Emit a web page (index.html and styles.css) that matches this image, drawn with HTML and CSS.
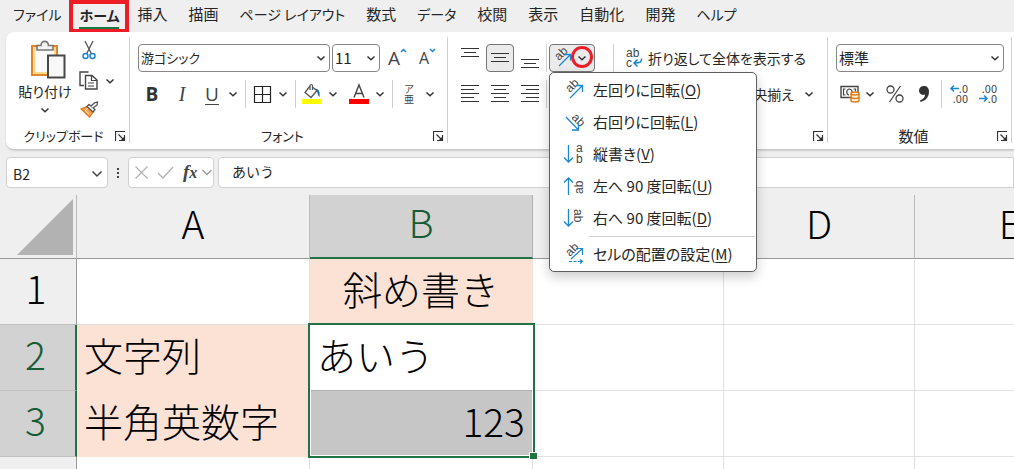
FILE: index.html
```html
<!DOCTYPE html>
<html lang="ja">
<head>
<meta charset="utf-8">
<title>斜め書き</title>
<link rel="stylesheet" href="styles.css">
</head>
<body>
<svg class="defs" aria-hidden="true">
  <symbol id="chev" viewBox="0 0 10 8"><path d="M1.500 2.500 5 5.800 8.500 2.500" fill="none" stroke="currentColor" stroke-width="1.500"/></symbol>
  <symbol id="launch" viewBox="0 0 11 11"><path d="M.5 10V.5H10M3.500 3.500 8 8M9.500 4V9.500H4" fill="none" stroke="#333" stroke-width="1.200"/><path d="M9.500 5.500V9.500H5.500Z" fill="#333"/></symbol>
</svg>

<nav class="tabs">
  <button class="tab kana file">ファイル</button>
  <button class="tab kana active"><span>ホーム</span></button>
  <button class="tab">挿入</button>
  <button class="tab">描画</button>
  <button class="tab kana">ページ レイアウト</button>
  <button class="tab">数式</button>
  <button class="tab kana">データ</button>
  <button class="tab">校閲</button>
  <button class="tab">表示</button>
  <button class="tab">自動化</button>
  <button class="tab">開発</button>
  <button class="tab kana">ヘルプ</button>
</nav>

<div class="ribbon">
  <section class="group clipboard">
    <div class="clip-body">
      <button class="paste">
        <svg width="36" height="40" viewBox="0 0 36 40"><path d="M2 6H27V35H2Z" fill="#fbd98a" stroke="#e0862a" stroke-width="2"/><path d="M5.500 9H24V32H5.500Z" fill="#fafafa"/><path d="M7 10V5.500H11C11 0 18 0 18.500 5.500H23V10Z" fill="#f3f3f3" stroke="#777" stroke-width="1.600"/><path d="M18 15.500H34.500V37.500H18Z" fill="#f8f8f8" stroke="#484848" stroke-width="2"/></svg>
        <span>貼り付け</span>
        <svg class="chev"><use href="#chev"/></svg>
      </button>
      <div class="clip-side">
        <button class="icon" aria-label="cut"><svg width="14" height="20" viewBox="0 0 14 20"><path d="M3 1 9.500 14M11 1 4.500 14" fill="none" stroke="#555" stroke-width="1.300"/><circle cx="3.500" cy="16" r="2.500" fill="none" stroke="#1b87d0" stroke-width="1.500"/><circle cx="10.500" cy="16" r="2.500" fill="none" stroke="#1b87d0" stroke-width="1.500"/></svg></button>
        <div class="copy"><button class="icon" aria-label="copy"><svg width="19" height="19" viewBox="0 0 19 19"><path d="M5 14.500H1V1H9.500" fill="none" stroke="#444" stroke-width="1.400"/><path d="M6.500 4.500H13L18 9V18H6.500Z" fill="#fff" stroke="#444" stroke-width="1.400"/><path d="M12.500 4.500V9.500H18M9 12H15M9 15H15" fill="none" stroke="#444" stroke-width="1.200"/></svg></button><button class="drop" aria-label="copy options"><svg class="chev"><use href="#chev"/></svg></button></div>
        <button class="icon" aria-label="format painter"><svg width="19" height="17" viewBox="0 0 19 17"><path d="M1 8 7 5.500 13 11 9.500 16 Z" fill="#f7a048" stroke="#e07818" stroke-width="1.200"/><path d="M5 9.500 9 13M8 7.500 5.500 9" stroke="#fff3d8" stroke-width="1"/><path d="M7 5.500 9 3.500 15 8.500 13 11Z" fill="#fff" stroke="#555" stroke-width="1.300"/><path d="M11 5 15 1.500 17.500 1 17 4 13 7" fill="#fff" stroke="#555" stroke-width="1.300"/></svg></button>
      </div>
    </div>
    <footer><span>クリップボード</span><button class="launch" aria-label="clipboard settings"><svg width="11" height="11"><use href="#launch"/></svg></button></footer>
  </section>

  <section class="group font">
    <div class="row first">
      <div class="combo name"><select aria-label="フォント"><option>游ゴシック</option></select><svg class="chev"><use href="#chev"/></svg></div>
      <div class="combo size"><select aria-label="size"><option>11</option></select><svg class="chev"><use href="#chev"/></svg></div>
      <button class="grow big">A<svg width="7" height="5" viewBox="0 0 7 5"><path d="M1 4 3.500 1.500 6 4" fill="none" stroke="#1b87d0" stroke-width="1.500"/></svg></button>
      <button class="grow">A<svg width="7" height="5" viewBox="0 0 7 5"><path d="M1 1 3.500 3.500 6 1" fill="none" stroke="#1b87d0" stroke-width="1.500"/></svg></button>
    </div>
    <div class="row second">
      <button class="tool bold">B</button>
      <button class="tool italic">I</button>
      <button class="tool under">U</button>
      <button class="drop tight" aria-label="underline options"><svg class="chev"><use href="#chev"/></svg></button>
      <i class="rule"></i>
      <button class="tool" aria-label="borders"><svg width="17" height="17" viewBox="0 0 17 17"><path d="M.5.500H16.500V16.500H.5ZM8.500.500V16.500M.5 8.500H16.500" fill="none" stroke="#222" stroke-width="1.200"/></svg></button>
      <button class="drop" aria-label="border options"><svg class="chev"><use href="#chev"/></svg></button>
      <i class="rule"></i>
      <button class="tool" aria-label="fill"><svg width="20" height="20" viewBox="0 0 20 20"><path d="M8 2 3 8.500 9 13.500 15 6.500 11 3.500" fill="#fff" stroke="#555" stroke-width="1.300"/><path d="M8 6V2C8 0 10.500 0 10.500 2V6" fill="none" stroke="#555" stroke-width="1.200"/><path d="M12 5C16 4 18.500 7 17.500 13 16 12 15.500 9 15 7Z" fill="#1769aa"/><path d="M0 15H20V20H0Z" fill="#ff0"/></svg></button>
      <button class="drop wide" aria-label="fill options"><svg class="chev"><use href="#chev"/></svg></button>
      <button class="tool" aria-label="font color"><svg width="20" height="20" viewBox="0 0 20 20"><path d="M5 13.500 10 1 15 13.500M6.500 9.500H13.500" fill="none" stroke="#444" stroke-width="1.400"/><path d="M0 15H20V20H0Z" fill="red"/></svg></button>
      <button class="drop" aria-label="color options"><svg class="chev"><use href="#chev"/></svg></button>
      <i class="rule"></i>
      <button class="tool ruby"><span>ア</span><span>亜</span></button>
      <button class="drop" aria-label="ruby options"><svg class="chev"><use href="#chev"/></svg></button>
    </div>
    <footer><span>フォント</span><button class="launch" aria-label="font settings"><svg width="11" height="11"><use href="#launch"/></svg></button></footer>
  </section>

  <section class="group align">
    <div class="row first">
      <button class="tool" aria-label="top"><svg width="18" height="28" viewBox="0 0 18 28"><path d="M0 4.500H18M3 8.500H15M0 12.500H18" stroke="#333" stroke-width="1.100"/></svg></button>
      <button class="tool on" aria-label="middle"><svg width="18" height="28" viewBox="0 0 18 28"><path d="M0 9.500H18M3 13.500H15M0 17.500H18" stroke="#333" stroke-width="1.100"/></svg></button>
      <button class="tool" aria-label="bottom"><svg width="18" height="28" viewBox="0 0 18 28"><path d="M0 15.500H18M3 19.500H15M0 23.500H18" stroke="#333" stroke-width="1.100"/></svg></button>
      <i class="rule near"></i>
      <div class="orient">
        <button class="orient-btn" aria-haspopup="menu" aria-expanded="true" aria-label="orientation">
          <svg width="20" height="20" viewBox="0 0 20 20"><text class="ab" transform="translate(6 13) rotate(-45)">ab</text><path d="M6 18 17 7M11.500 6.500H17.500V12.500" fill="none" stroke="#1b87d0" stroke-width="1.300"/></svg>
          <svg class="chev"><use href="#chev"/></svg>
          <span class="ring"></span>
        </button>
        <div class="menu" role="menu">
          <button role="menuitem"><svg width="20" height="20" viewBox="0 0 20 20"><text class="ab" transform="translate(6 13) rotate(-45)">ab</text><path d="M6 18 18 6M12 5.500H18.500V12" fill="none" stroke="#1b87d0" stroke-width="1.300"/></svg><span>左回りに回転(<u>O</u>)</span></button>
          <button role="menuitem"><svg width="20" height="20" viewBox="0 0 20 20"><text class="ab" transform="translate(7 6) rotate(45)">ab</text><path d="M2 5 14 17.500M14.500 11.500V18H8" fill="none" stroke="#1b87d0" stroke-width="1.300"/></svg><span>右回りに回転(<u>L</u>)</span></button>
          <button role="menuitem"><svg width="20" height="20" viewBox="0 0 20 20"><text class="ab" x="12" y="8">a</text><text class="ab" x="12" y="19">b</text><path d="M4.500 1V18M0 13.500 4.500 18 9 13.500" fill="none" stroke="#1b87d0" stroke-width="1.300"/></svg><span>縦書き(<u>V</u>)</span></button>
          <button role="menuitem"><svg width="20" height="20" viewBox="0 0 20 20"><text class="ab" transform="translate(19 18) rotate(-90)">ab</text><path d="M4.500 19V2M0 6.500 4.500 2 9 6.500" fill="none" stroke="#1b87d0" stroke-width="1.300"/></svg><span>左へ 90 度回転(<u>U</u>)</span></button>
          <button role="menuitem"><svg width="20" height="20" viewBox="0 0 20 20"><text class="ab" transform="translate(10 1) rotate(90)">ab</text><path d="M4.500 1V18M0 13.500 4.500 18 9 13.500" fill="none" stroke="#1b87d0" stroke-width="1.300"/></svg><span>右へ 90 度回転(<u>D</u>)</span></button>
          <hr>
          <button role="menuitem"><svg width="20" height="20" viewBox="0 0 20 20"><text class="ab" transform="translate(6 13) rotate(-45)">ab</text><path d="M7 15 18 5M12 4.500H18.500V11M5 17.500H8M9.500 17.500H12.500M14 17.500H18M16 15.500 18.500 17.500 16 19.500" fill="none" stroke="#1b87d0" stroke-width="1.200"/></svg><span>セルの配置の設定(<u>M</u>)</span></button>
        </div>
      </div>
      <i class="rule after-orient"></i>
      <button class="wrap"><svg width="17" height="20" viewBox="0 0 17 20"><text class="ab" x="0" y="9">ab</text><text class="ab" x="0" y="19">c</text><path d="M15.500 10.500C16 14 14 15 8.500 15M11.500 11.500 8 15 11.500 18.500" fill="none" stroke="#1b87d0" stroke-width="1.500"/></svg><span>折り返して全体を表示する</span></button>
    </div>
    <div class="row second">
      <button class="tool" aria-label="left"><svg width="18" height="18" viewBox="0 0 18 18"><path d="M0 .5H18M0 4.500H13M0 8.500H18M0 12.500H13M0 16.500H18" stroke="#333" stroke-width="1.100"/></svg></button>
      <button class="tool" aria-label="center"><svg width="18" height="18" viewBox="0 0 18 18"><path d="M0 .5H18M3 4.500H15M0 8.500H18M3 12.500H15M0 16.500H18" stroke="#333" stroke-width="1.100"/></svg></button>
      <button class="tool" aria-label="right"><svg width="18" height="18" viewBox="0 0 18 18"><path d="M0 .5H18M5 4.500H18M0 8.500H18M5 12.500H18M0 16.500H18" stroke="#333" stroke-width="1.100"/></svg></button>
      <i class="rule near"></i>
      <button class="merge">央揃え</button>
      <button class="drop merge-drop" aria-label="merge options"><svg class="chev"><use href="#chev"/></svg></button>
    </div>
    <footer><span></span><button class="launch" aria-label="alignment settings"><svg width="11" height="11"><use href="#launch"/></svg></button></footer>
  </section>

  <section class="group number">
    <div class="row first">
      <div class="combo format"><select aria-label="数値"><option>標準</option></select><svg class="chev"><use href="#chev"/></svg></div>
    </div>
    <div class="row second">
      <button class="tool" aria-label="currency"><svg width="20" height="18" viewBox="0 0 20 18"><path d="M1 1.500H18V12.500H1Z" fill="#fff" stroke="#444" stroke-width="1.400"/><path d="M5.500 4H3.500V10H5.500M13.500 4H15.500V6M9 4C6 4.500 6 9.500 9 10M9 4C11 4 12 5 12 7" fill="none" stroke="#444" stroke-width="1.200"/><path d="M11 8.500C11 6.500 19 6.500 19 8.500V15.500C19 17.500 11 17.500 11 15.500Z" fill="#fff0d8" stroke="#e07818" stroke-width="1.400"/><path d="M11 8.500C11 10.500 19 10.500 19 8.500M11 12C11 14 19 14 19 12" fill="none" stroke="#e07818" stroke-width="1.400"/></svg></button>
      <button class="drop" aria-label="currency options"><svg class="chev"><use href="#chev"/></svg></button>
      <button class="tool percent" aria-label="percent"><svg width="18" height="18" viewBox="0 0 18 18"><path d="M14.500 1 3.500 17" stroke="#444" stroke-width="1.300"/><circle cx="4.500" cy="4.500" r="3.500" fill="none" stroke="#444" stroke-width="1.300"/><circle cx="13.500" cy="13.500" r="3.500" fill="none" stroke="#444" stroke-width="1.300"/></svg></button>
      <button class="tool" aria-label="comma"><svg width="12" height="18" viewBox="0 0 12 18"><path d="M6 1C9 1 11 3 11 6.500 11 12 8 15.500 2.500 17L2 15.500C5.500 14 7 12.500 7 9.500 3.500 11 1 8.500 1 5.500 1 3 3 1 6 1Z" fill="#333"/></svg></button>
      <i class="rule"></i>
      <button class="tool" aria-label="increase decimals"><svg width="18" height="20" viewBox="0 0 18 20"><text class="dec" x="18" y="9">.0</text><text class="dec" x="18" y="19">.00</text><path d="M9 4.500H1M4 1.500 1 4.500 4 7.500" fill="none" stroke="#1b87d0" stroke-width="1.500"/></svg></button>
      <button class="tool" aria-label="decrease decimals"><svg width="18" height="20" viewBox="0 0 18 20"><text class="dec" x="18" y="9">.00</text><text class="dec" x="18" y="19">.0</text><path d="M0 14.500H8M5 11.500 8 14.500 5 17.500" fill="none" stroke="#1b87d0" stroke-width="1.500"/></svg></button>
    </div>
    <footer><span>数値</span><button class="launch" aria-label="number settings"><svg width="11" height="11"><use href="#launch"/></svg></button></footer>
  </section>
</div>

<div class="formula-bar">
  <div class="name-box"><input value="B2" aria-label="name box"><svg class="chev big" viewBox="0 0 12 8"><path d="M1.500 1.500 6 6 10.500 1.500" fill="none" stroke="#444" stroke-width="1.500"/></svg></div>
  <svg class="dots" width="4" height="12" viewBox="0 0 4 12"><path d="M1 1H3V3H1ZM1 5H3V7H1ZM1 9H3V11H1Z" fill="#444"/></svg>
  <div class="fx-box">
    <button aria-label="cancel"><svg width="13" height="13" viewBox="0 0 13 13"><path d="M.5.500 12.500 12.500M12.500.500.500 12.500" stroke="#b0b0b0" stroke-width="1.200"/></svg></button>
    <button aria-label="enter"><svg width="17" height="13" viewBox="0 0 17 13"><path d="M1 7 6 12 16 1" fill="none" stroke="#b0b0b0" stroke-width="1.300"/></svg></button>
    <button class="fx"><i>f</i><i class="x">x</i></button>
    <button aria-label="functions"><svg width="10" height="7" viewBox="0 0 10 7"><path d="M.5 1 5 5.500 9.500 1" fill="none" stroke="#999" stroke-width="1.300"/></svg></button>
  </div>
  <input class="formula" value="あいう" aria-label="formula">
</div>

<main class="sheet">
  <table>
    <colgroup><col class="c-head"><col class="c-a"><col class="c-b"><col class="c-n"><col class="c-n"><col class="c-n"></colgroup>
    <thead><tr><th class="corner"><svg width="56" height="56" viewBox="0 0 56 56"><path d="M56 0V56H0Z" fill="#b2b2b2"/></svg></th><th>A</th><th class="sel">B</th><th></th><th>D</th><th>E</th></tr></thead>
    <tbody>
      <tr><th>1</th><td></td><td class="peach center">斜め書き</td><td></td><td></td><td></td></tr>
      <tr><th class="sel">2</th><td class="peach">文字列</td><td class="start">あいう<span class="selection"></span></td><td></td><td></td><td></td></tr>
      <tr><th class="sel">3</th><td class="peach">半角英数字</td><td class="picked">123</td><td></td><td></td><td></td></tr>
      <tr><th></th><td></td><td></td><td></td><td></td><td></td></tr>
    </tbody>
  </table>
</main>
</body>
</html>
```
FILE: styles.css
```css
* { box-sizing: border-box; }

body {
  margin: 0;
  height: 100vh;
  display: flex;
  flex-direction: column;
  overflow: hidden;
  background: #efefef;
  color: #262626;
  font: 15px/20px "Noto Sans CJK JP", sans-serif;
  font-feature-settings: "palt";
}

button, input, select {
  margin: 0;
  padding: 0;
  border: 0;
  background: none;
  color: inherit;
  font: inherit;
  font-feature-settings: inherit;
  white-space: nowrap;
}

svg { display: block; flex: none; overflow: visible; }
.defs { position: absolute; width: 0; height: 0; }
.chev { width: 10px; height: 8px; color: #333; }

/* Tabs */
.tabs { display: flex; flex: none; height: 32px; padding-left: 3px; }
.tab { height: 32px; padding: 0 10px 4px; margin-right: 1px; }
.kana { font-size: 14px; }
.file { padding-right: 8px; margin-right: 0; }
.active { height: 33px; margin: 0 -2px 0 0; padding: 0 6px; border: 4px solid #ee1c25; font-weight: 700; }
.active span { display: block; height: 24px; border-bottom: 2px solid #107c41; }

/* Ribbon */
.ribbon {
  display: flex;
  flex: none;
  height: 118px;
  margin-left: 6px;
  background: #fff;
  border-bottom: 1px solid #c8c8c8;
  border-radius: 8px 0 0 8px;
  box-shadow: 0 1px 2px #0002;
}
.group {
  display: flex;
  flex: none;
  flex-direction: column;
  position: relative;
  padding: 12px 8px 0;
}
.group::after {
  content: "";
  position: absolute;
  right: 0;
  top: 5px;
  bottom: 6px;
  width: 1px;
  background: #d0d0d0;
}
.clipboard { width: 124px; padding: 8px 8px 0 12px; }
.font { width: 318px; }
.align { width: 380px; }
.number { width: 184px; }

.row { display: flex; height: 28px; align-items: center; }
.second { margin-top: 8px; }
.tool { display: flex; width: 28px; height: 28px; align-items: center; justify-content: center; margin-right: 2px; }
.tool:has(+ .drop) { margin-right: 0; }
.drop { display: flex; width: 14px; height: 28px; align-items: center; justify-content: center; }
.wide { margin-right: 5px; }
.rule { width: 1px; height: 28px; margin: 0 2px 0 5px; background: #d0d0d0; }
.near { margin: 0 2px 0 0; }

.group footer { display: flex; align-items: center; height: 20px; margin-top: auto; margin-bottom: 3px; font-size: 13px; }
.group footer span { flex: 1; text-align: center; padding-right: 6px; }
.number footer { font-size: 15px; }
.group .launch { height: 11px; margin-right: -4px; }

.clip-body { display: flex; }
.paste { display: flex; width: 56px; flex-direction: column; align-items: center; font-size: 14px; }
.paste svg:first-child { margin-left: 5px; }
.paste span { line-height: 22px; }
.paste .chev { margin-top: 4px; }
.clip-side { display: flex; flex-direction: column; gap: 11px; padding-left: 7px; }
.clip-side > .icon { padding-left: 3px; align-self: flex-start; }
.clip-side > .icon:last-child { padding-left: 1px; }
.copy { display: flex; align-items: center; }
.copy .drop { height: 19px; width: 24px; }

.combo { display: grid; height: 28px; align-items: center; border: 1px solid #868686; border-radius: 4px; background: #fff; }
.combo select { grid-area: 1 / 1; appearance: none; height: 26px; padding: 0 2px; outline: 0; }
.combo .chev { grid-area: 1 / 1; justify-self: end; margin-right: 3px; pointer-events: none; }
.name { width: 192px; margin-right: 2px; }
.name select { font-size: 13px; }
.size { width: 48px; }
.format { flex: 1; }
.grow { display: flex; align-items: flex-start; margin-left: 8px; font: 16px/20px "Open Sans", sans-serif; color: #444; }
.grow + .grow { margin-left: 12px; }
.grow.big { font-size: 19px; }

.bold { font: 700 19px "Open Sans", sans-serif; color: #333; }
.italic { font: italic 20px "Liberation Serif", serif; color: #444; }
.under { font: 19px/20px "Open Sans", sans-serif; text-decoration: underline; text-underline-offset: 3px; text-decoration-thickness: 1px; color: #444; }
.ruby { flex-direction: column; font-size: 10px; line-height: 10px; color: #444; }

.on { border: 1px solid #767676; border-radius: 4px; background: #ebebeb; }
.orient { position: relative; }
.orient-btn {
  display: flex;
  position: relative;
  width: 46px;
  height: 28px;
  padding: 0 7px 0 3px;
  align-items: center;
  justify-content: space-between;
  border: 1px solid #767676;
  border-radius: 4px;
  background: #ebebeb;
}
.ring { position: absolute; right: 1px; top: 1px; width: 22px; height: 22px; border: 3px solid #ee1c25; border-radius: 50%; }
.ab { font: 12px "Liberation Sans", sans-serif; fill: #444; }
.dec { font: 11px "Noto Sans CJK JP", sans-serif; fill: #444; text-anchor: end; }

.menu {
  position: absolute;
  z-index: 5;
  left: 0;
  top: 28px;
  width: 208px;
  padding: 1px;
  border: 1px solid #606060;
  border-radius: 5px;
  background: #fff;
  box-shadow: 0 5px 12px #0003;
}
.menu button { display: flex; width: 100%; height: 32px; align-items: center; gap: 9px; padding-left: 13px; }
.menu button span { padding-bottom: 1px; }
.menu u { text-underline-offset: 2px; text-decoration-thickness: 1px; }
.menu hr { height: 1px; margin: 2px 0 1px 38px; border: 0; background: #d0d0d0; }

.after-orient { margin: 0 12px 0 18px; }
.wrap { display: flex; align-items: center; gap: 5px; font-size: 14px; }
.merge { margin-left: auto; font-size: 14px; }
.merge-drop { margin: 0 4px 0 8px; }
.percent { margin-left: 4px; }
.number .rule { margin-left: 1px; margin-right: 3px; }

/* Formula bar */
.formula-bar { display: flex; flex: none; height: 45px; padding: 7px 0 0 6px; }
.name-box, .fx-box, .formula { height: 31px; border: 1px solid #d0d0d0; border-radius: 4px; background: #fff; }
.name-box { display: flex; width: 102px; align-items: center; padding: 3px 4px 0 6px; font-size: 14px; }
.name-box input { flex: 1; min-width: 0; }
.name-box .big { width: 12px; height: 8px; }
.dots { margin: 10px 8px 0; }
.fx-box { display: flex; width: 86px; align-items: center; gap: 9px; padding: 0 2px 0 6px; }
.fx { width: 16px; font: 700 19px/20px "Liberation Serif", serif; color: #444; }
.fx-box button:last-child { margin-left: -4px; }
.fx .x { font-size: 16px; }
.formula { flex: 1; margin-left: 4px; padding: 0 13px 3px; border-radius: 4px 0 0 4px; font-size: 14px; font-feature-settings: normal; }

/* Sheet */
.sheet { flex: 1; overflow: hidden; background: #fff; }
table { width: 1106px; table-layout: fixed; border-collapse: separate; border-spacing: 0; color: #000; font-size: 39px; line-height: 48px; font-weight: 300; font-feature-settings: normal; }
.c-head { width: 77px; }
.c-a { width: 233px; }
.c-b { width: 223px; }
.c-n { width: 191px; }
th, td { height: 66px; padding: 0 7px 8px; border: 0 solid #e0e0e0; border-width: 0 1px 1px 0; white-space: nowrap; text-align: left; font-weight: 300; }
th { padding: 0 4px 10px 0; text-align: center; background: #efefef; border-color: #999; }
thead th { height: 64px; padding: 0 0 10px; border-right-color: #bbb; }
tbody th { border-bottom-color: #c0c0c0; }
thead .corner { padding: 0; vertical-align: bottom; }
.corner svg { margin: 0 0 3px 17px; }
th.sel { background: #d2d2d2; color: #185c37; border-right-color: #b0b0b0; }
thead th.sel { border-bottom: 2px solid #217346; }
tbody th.sel { border-right: 2px solid #217346; }
.peach { background: #fce2d5; border-color: #fce2d5; }
.center { text-align: center; }
.start { position: relative; border-bottom-color: #b0b0b0; }
.picked { background: #c6c6c6; text-align: right; }
.selection { position: absolute; z-index: 1; left: -2px; top: -2px; width: 227px; height: 135px; border: 2px solid #217346; }
.selection::before { content: ""; position: absolute; inset: 0; border: 1px solid #fff; }
.selection::after { content: ""; position: absolute; right: -4px; bottom: -3px; width: 7px; height: 6px; background: #217346; border: solid #fff; border-width: 1px 0 0 1px; }
```
